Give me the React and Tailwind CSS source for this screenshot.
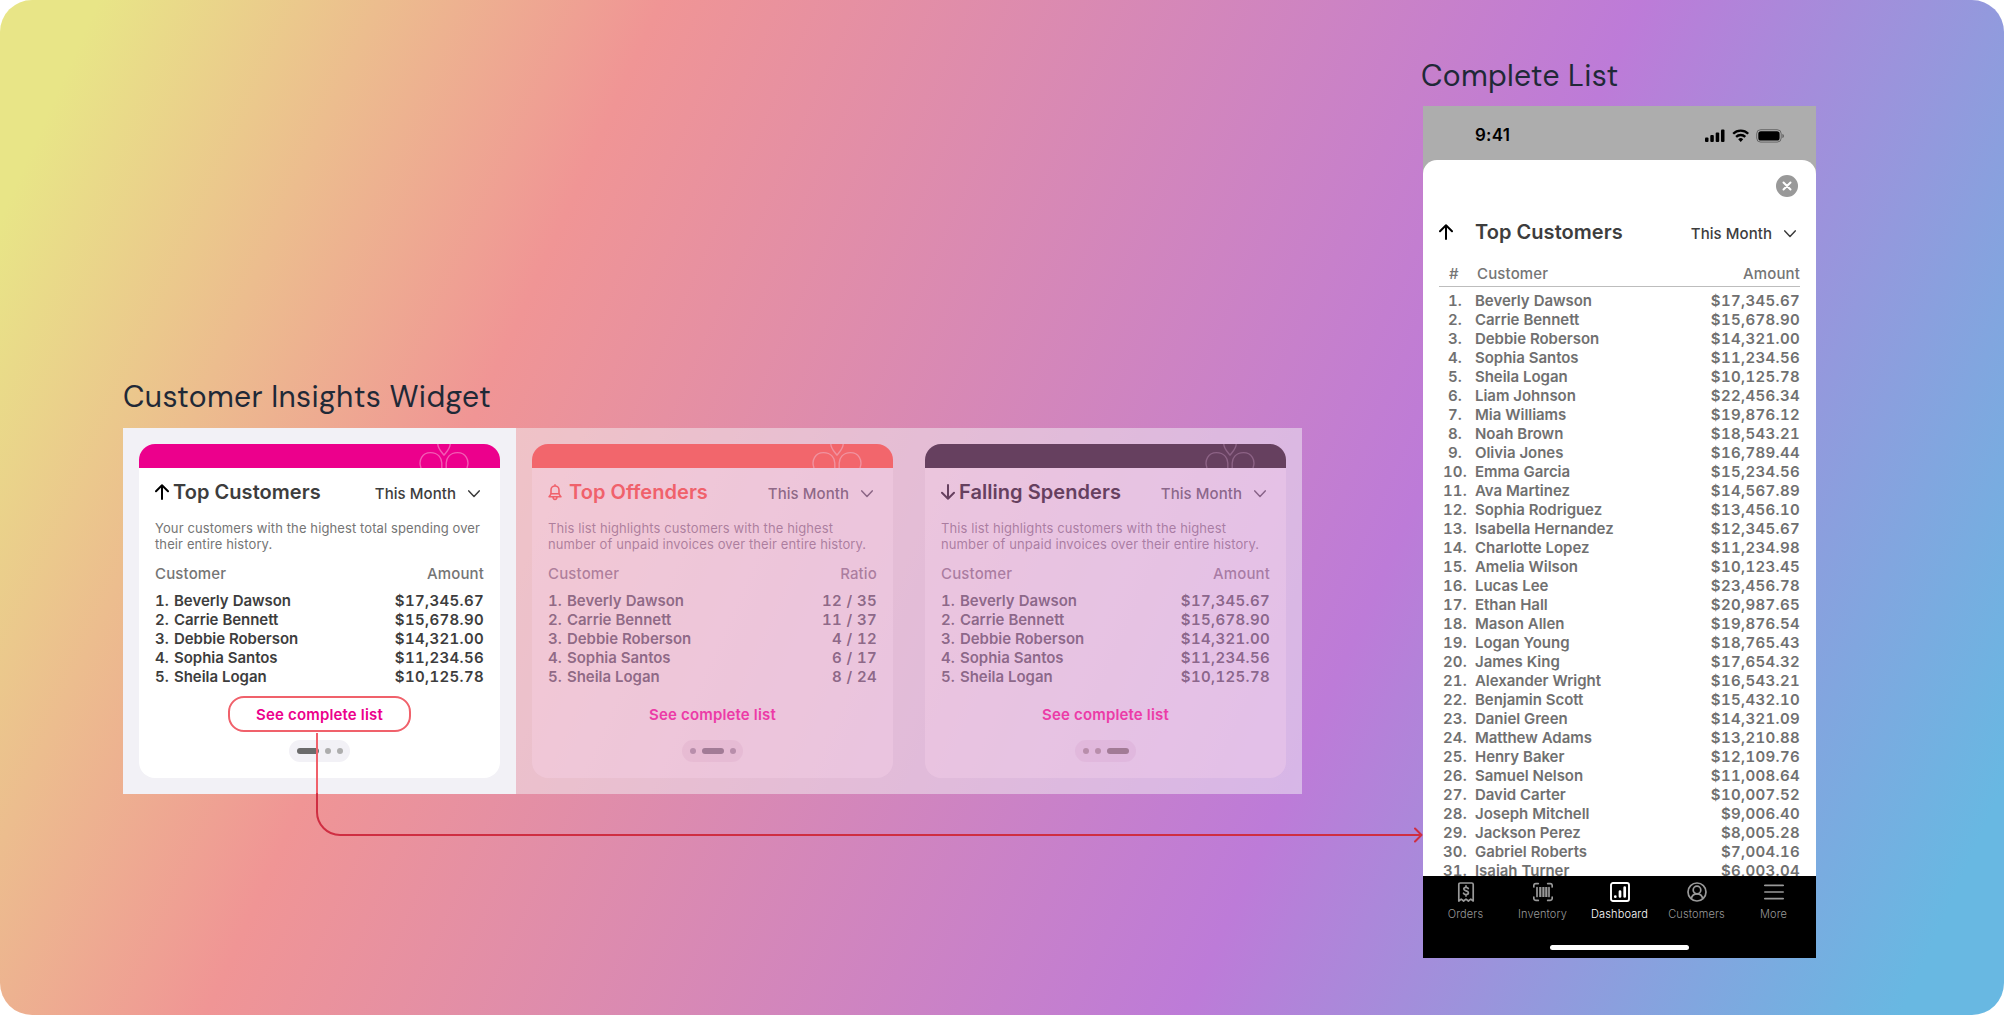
import React from 'react';

const TOP_FIVE = [
  ['Beverly Dawson', '$17,345.67', '12 / 35'],
  ['Carrie Bennett', '$15,678.90', '11 / 37'],
  ['Debbie Roberson', '$14,321.00', '4 / 12'],
  ['Sophia Santos', '$11,234.56', '6 / 17'],
  ['Sheila Logan', '$10,125.78', '8 / 24'],
];

const ALL_CUSTOMERS = [
  ['Beverly Dawson', '$17,345.67'],
  ['Carrie Bennett', '$15,678.90'],
  ['Debbie Roberson', '$14,321.00'],
  ['Sophia Santos', '$11,234.56'],
  ['Sheila Logan', '$10,125.78'],
  ['Liam Johnson', '$22,456.34'],
  ['Mia Williams', '$19,876.12'],
  ['Noah Brown', '$18,543.21'],
  ['Olivia Jones', '$16,789.44'],
  ['Emma Garcia', '$15,234.56'],
  ['Ava Martinez', '$14,567.89'],
  ['Sophia Rodriguez', '$13,456.10'],
  ['Isabella Hernandez', '$12,345.67'],
  ['Charlotte Lopez', '$11,234.98'],
  ['Amelia Wilson', '$10,123.45'],
  ['Lucas Lee', '$23,456.78'],
  ['Ethan Hall', '$20,987.65'],
  ['Mason Allen', '$19,876.54'],
  ['Logan Young', '$18,765.43'],
  ['James King', '$17,654.32'],
  ['Alexander Wright', '$16,543.21'],
  ['Benjamin Scott', '$15,432.10'],
  ['Daniel Green', '$14,321.09'],
  ['Matthew Adams', '$13,210.88'],
  ['Henry Baker', '$12,109.76'],
  ['Samuel Nelson', '$11,008.64'],
  ['David Carter', '$10,007.52'],
  ['Joseph Mitchell', '$9,006.40'],
  ['Jackson Perez', '$8,005.28'],
  ['Gabriel Roberts', '$7,004.16'],
  ['Isaiah Turner', '$6,003.04'],
];

const ArrowUp = ({ className }) => (
  <svg className={className} width="14" height="16" viewBox="0 0 14 16" fill="none" stroke="currentColor" strokeWidth="2" strokeLinecap="round" strokeLinejoin="round">
    <path d="M7 15V1.3M1 7.2L7 1.2l6 6" />
  </svg>
);

const ArrowDown = ({ className }) => (
  <svg className={className} width="14" height="16" viewBox="0 0 14 16" fill="none" stroke="currentColor" strokeWidth="2" strokeLinecap="round" strokeLinejoin="round">
    <path d="M7 1v13.7M1 8.8l6 6 6-6" />
  </svg>
);

const Bell = ({ className }) => (
  <svg className={className} width="14" height="17" viewBox="0 0 14 17" fill="none" stroke="currentColor" strokeWidth="1.6" strokeLinecap="round" strokeLinejoin="round">
    <path d="M7 .9v1M3 6a4 4 0 018 0v3.2c0 1 .4 1.600 1.900 3.600H1.100C2.600 10.800 3 10.200 3 9.200zM3.300 9.800h7.400M5 13.200c.2 1.500.9 2.300 2 2.300s1.800-.8 2-2.300" />
  </svg>
);

const Chevron = () => (
  <svg width="12" height="8" viewBox="0 0 12 8" fill="none" stroke="currentColor" strokeWidth="1.5" strokeLinecap="round" strokeLinejoin="round">
    <path d="M.8.9L6 6.400 11.200.9" />
  </svg>
);

/* Three-petal mark cropped by the colored card header */
const Petals = ({ className }) => (
  <svg className={className} width="50" height="24" viewBox="0 0 50 24" fill="none" stroke="currentColor" strokeWidth="1.4">
    <path d="M18.800 0c0 4.500 3.400 7.500 6.200 11.200C27.800 7.500 31.200 4.500 31.200 0" />
    <path d="M2 24C-1 16 3.500 8.600 11.500 8.600c8 0 11.300 6 11.300 10.400v5" />
    <path d="M48 24C51 16 46.500 8.600 38.500 8.600c-8 0-11.300 6-11.300 10.400v5" />
  </svg>
);

function Pager({ active, track, on, off }) {
  return (
    <div className={`flex h-[22px] w-[61px] items-center justify-center gap-1.5 rounded-full ${track}`}>
      {[0, 1, 2].map((i) => (
        <span key={i} className={`h-1.5 rounded-full ${i === active ? `w-[22px] ${on}` : `w-1.5 ${off}`}`} />
      ))}
    </div>
  );
}

function InsightCard({ icon, title, titleClass, header, petals, description, valueLabel, valueIndex, page, faded }) {
  const body = faded ? 'text-[#502b50]/62' : 'text-[#3d3d3d]';
  const muted = faded ? 'text-[#6b3563]/50' : 'text-[#757575]';

  return (
    <div className={`flex w-[393px] p-4 ${faded ? '' : 'bg-[#f2f1f6]'}`}>
      <div className={`flex h-[334px] w-[361px] flex-col overflow-hidden rounded-2xl ${faded ? 'bg-[#fbd8ee]/30' : 'bg-white'}`}>
        <div className={`flex h-6 shrink-0 justify-end pr-[31px] ${header}`}>
          <Petals className={petals} />
        </div>

        <div className="flex flex-1 flex-col px-4">
          <div className="mt-[11px] flex h-[26px] items-center justify-between">
            <h2 className={`flex items-center text-[20px] leading-[26px] font-semibold tracking-[0.05px] whitespace-nowrap ${titleClass}`}>
              {icon}
              {title}
            </h2>
            <div className={`mt-1 mr-[4px] flex items-center gap-3 text-[15px] font-medium tracking-[0.06px] whitespace-nowrap ${faded ? 'text-[#502b50]/62' : 'text-[#3d3d3d]'}`}>
              This Month
              <Chevron />
            </div>
          </div>

          <p className={`mt-[15px] text-[13px] leading-4 tracking-[0.11px] whitespace-pre-line ${muted}`}>{description}</p>

          <div className={`mt-3 flex h-5 items-center justify-between text-[15px] font-medium tracking-[0.15px] ${muted}`}>
            <span>Customer</span>
            <span>{valueLabel}</span>
          </div>

          <ol className={`mt-[7px] text-[15px] leading-[19px] font-semibold tabular-nums ${body}`}>
            {TOP_FIVE.map((row, i) => (
              <li key={row[0]} className="flex justify-between">
                <span className="flex">
                  <span className="w-[19px]">{i + 1}.</span>
                  <span className="tracking-[-0.04px]">{row[0]}</span>
                </span>
                <span className="tracking-[0.34px]">{row[valueIndex]}</span>
              </li>
            ))}
          </ol>

          <div className="mt-2.5 flex flex-col items-center">
            <button
              className={`h-9 w-[183px] rounded-[16px] border-2 pt-0.5 text-[15px] font-semibold tracking-[0.17px] ${
                faded ? 'border-transparent text-[#ec3ba7]' : 'border-[#f0616b] text-[#ec008c]'
              }`}
            >
              See complete list
            </button>
            <div className="mt-2">
              <Pager
                active={page}
                track={faded ? 'bg-[#a05090]/8' : 'bg-[#f2f1f6]'}
                on={faded ? 'bg-[#a27b96]' : 'bg-[#6b6b6b]'}
                off={faded ? 'bg-[#b88eab]' : 'bg-[#adadad]'}
              />
            </div>
          </div>
        </div>
      </div>
    </div>
  );
}

/* Status bar glyphs */
const StatusIcons = () => (
  <svg width="79" height="14" viewBox="0 0 79 14">
    <rect x="0" y="8.500" width="3.500" height="4.500" rx="1" />
    <rect x="5.300" y="6" width="3.500" height="7" rx="1" />
    <rect x="10.700" y="3.500" width="3.500" height="9.500" rx="1" />
    <rect x="16" y=".5" width="3.500" height="12.500" rx="1" />
    <g fill="none" stroke="#000" strokeWidth="2.300">
      <path d="M28.200 4.800a10.500 10.500 0 0115 0" />
      <path d="M31.100 7.900a6.500 6.500 0 019.200 0" />
    </g>
    <path d="M35.700 13l-2.500-2.700a3.600 3.600 0 015 0z" />
    <rect x="51.700" y=".7" width="24.500" height="12.400" rx="4" fill="none" stroke="#000" strokeOpacity=".4" />
    <rect x="53.300" y="2.200" width="21.300" height="9.400" rx="2.600" />
    <path d="M77.400 4.900v4c1-.4 1.500-1.100 1.500-2s-.5-1.600-1.500-2z" opacity=".45" />
  </svg>
);

const TABS = [
  {
    label: 'Orders',
    icon: (
      <>
        <path d="M2.800 19V2.600C2.800 1.600 3.300 1 4.300 1h11.400c1 0 1.500.6 1.500 1.600V19l-2.400-1.900L12.400 19 10 17.100 7.600 19l-2.400-1.900z" />
        <path d="M12.300 6.500c-.4-.8-1.200-1.200-2.300-1.200-1.300 0-2.200.6-2.200 1.700 0 2.500 4.600 1.200 4.600 3.800 0 1.100-1 1.800-2.400 1.800-1.200 0-2.100-.5-2.500-1.400M10 3.900v1.400M10 12.600V14" />
      </>
    ),
  },
  {
    label: 'Inventory',
    icon: (
      <>
        <path d="M.8 5V3.600c0-1.300.8-2 2-2h2.500M14.700 1.600h2.500c1.200 0 2 .7 2 2V5M.8 15v1.400c0 1.300.8 2 2 2h2.500M14.700 18.400h2.500c1.200 0 2-.7 2-2V15" />
        <path d="M4 5.600v8.800M16 5.600v8.800" />
        <path d="M7.300 5v10M10.400 5v10M13.300 5v10" strokeWidth="2.200" strokeLinecap="butt" />
      </>
    ),
  },
  {
    label: 'Dashboard',
    icon: (
      <>
        <rect x="1" y="1" width="18" height="18" rx="2" strokeWidth="1.9" />
        <path d="M5.300 14.500v.2M10 9.500v5M14.700 5.500v9" strokeWidth="2.700" />
      </>
    ),
  },
  {
    label: 'Customers',
    icon: (
      <>
        <circle cx="10" cy="10" r="9" />
        <circle cx="10" cy="8" r="3.800" />
        <path d="M4.300 16.500c.7-3 2.600-4.700 5.700-4.700s5 1.700 5.700 4.700" />
      </>
    ),
  },
  {
    label: 'More',
    icon: <path d="M.8 3.400h18.400M.8 10h18.400M.8 16.600h18.400" />,
  },
];

function CompleteList() {
  return (
    <div className="flex h-[852px] w-[393px] flex-col overflow-hidden bg-[#adadad]">
      <div className="flex h-[54px] shrink-0 items-start justify-between pt-[17px] pr-8 pl-[52px]">
        <span className="text-[17px] leading-6 font-semibold tracking-[0.2px] text-black">9:41</span>
        <div className="pt-[5.5px]">
          <StatusIcons />
        </div>
      </div>

      {/* Bottom sheet */}
      <div className="flex h-[716px] shrink-0 flex-col overflow-hidden rounded-t-[14px] bg-white px-4">
        <div className="mt-[15px] mr-[2px] flex justify-end">
          <svg width="22" height="22" viewBox="0 0 22 22">
            <circle cx="11" cy="11" r="11" fill="#999" />
            <path d="M7.500 7.500l7 7m0-7l-7 7" stroke="#fff" strokeWidth="2" strokeLinecap="round" />
          </svg>
        </div>

        <div className="mt-[22px] flex h-[26px] items-center justify-between">
          <h2 className="flex items-center text-[20px] leading-[26px] font-semibold tracking-[0.05px] text-[#3d3d3d]">
            <ArrowUp className="mr-[22px] text-black" />
            Top Customers
          </h2>
          <div className="mt-1 mr-[4px] flex items-center gap-3 text-[15px] font-medium tracking-[0.06px] text-[#3d3d3d]">
            This Month
            <Chevron />
          </div>
        </div>

        <div className="mt-[14px] flex h-[28px] shrink-0 border-b border-[#bdbdbd] pt-0.5 text-[15px] leading-[26px] font-medium tracking-[0.15px] text-[#757575]">
          <span className="w-[38px] pl-[10px]">#</span>
          <span>Customer</span>
          <span className="ml-auto">Amount</span>
        </div>

        <ol className="mt-[4px] text-[15px] leading-[19px] font-semibold text-[#707070] tabular-nums">
          {ALL_CUSTOMERS.map((row, i) => (
            <li key={i} className="flex">
              <span className="mr-[4px] w-[32px] text-center tracking-[0.2px]">{i + 1}.</span>
              <span className="tracking-[-0.04px]">{row[0]}</span>
              <span className="ml-auto tracking-[0.34px]">{row[1]}</span>
            </li>
          ))}
        </ol>
      </div>

      {/* Tab bar */}
      <nav className="flex h-[82px] shrink-0 flex-col items-center bg-black">
        <div className="flex w-[385px]">
          {TABS.map((tab) => (
            <div key={tab.label} className={`flex flex-1 flex-col items-center pt-1.5 ${tab.label === 'Dashboard' ? 'text-white' : 'text-[#999]'}`}>
              <svg width="20" height="20" viewBox="0 0 20 20" fill="none" stroke="currentColor" strokeWidth="1.7" strokeLinecap="round" strokeLinejoin="round">
                {tab.icon}
              </svg>
              <span className="mt-[5px] text-[11px] leading-[14px] font-light tracking-[0.12px]">{tab.label}</span>
            </div>
          ))}
        </div>
        <div className="mt-auto mb-2 h-[5px] w-[139px] rounded-full bg-white" />
      </nav>
    </div>
  );
}

export default function App() {
  return (
    <div className="relative flex h-[1015px] w-[2004px] items-start overflow-hidden bg-white font-['Inter',sans-serif] [font-optical-sizing:none]">
      <div className="flex h-full w-full items-start rounded-[32px] bg-[linear-gradient(114.2deg,#e8e587_4%,#f09595_26.9%,#bd7bd8_66.7%,#68b8e2_95.8%)]">
        <section className="mt-[377px] ml-[123px]">
          <h1 className="h-[51px] font-['DM_Sans','Open_Sans',sans-serif] text-[30px] leading-[40px] tracking-[0.34px] text-[#1f2937]">Customer Insights Widget</h1>
          <div className="flex h-[366px] w-[1179px]">
            <InsightCard
              icon={<ArrowUp className="mr-1 text-black" />}
              title="Top Customers"
              titleClass="text-[#3d3d3d]"
              header="bg-[#ec008c]"
              petals="text-[#f25bb4]"
              description={'Your customers with the highest total spending over\ntheir entire history.'}
              valueLabel="Amount"
              valueIndex={1}
              page={0}
            />
            <div className="flex bg-[#f2f1f6]/50">
              <InsightCard
                faded
                icon={<Bell className="mr-[7px]" />}
                title="Top Offenders"
                titleClass="text-[#f0616b]"
                header="bg-[#f2666c]"
                petals="text-[#f0929f]"
                description={'This list highlights customers with the highest\nnumber of unpaid invoices over their entire history.'}
                valueLabel="Ratio"
                valueIndex={2}
                page={1}
              />
              <InsightCard
                faded
                icon={<ArrowDown className="mr-1" />}
                title="Falling Spenders"
                titleClass="text-[#66405f]"
                header="bg-[#66405f]"
                petals="text-[#8c6285]"
                description={'This list highlights customers with the highest\nnumber of unpaid invoices over their entire history.'}
                valueLabel="Amount"
                valueIndex={1}
                page={2}
              />
            </div>
          </div>
        </section>

        <section className="mt-[56px] ml-[121px]">
          <h1 className="-ml-0.5 h-[50px] font-['DM_Sans','Open_Sans',sans-serif] text-[30px] leading-[40px] tracking-[0.3px] text-[#1f2937]">Complete List</h1>
          <CompleteList />
        </section>
      </div>

      {/* Connector from the button to the phone */}
      <svg className="pointer-events-none absolute top-[732px] left-[310px]" width="1114" height="112" viewBox="0 0 1114 112" fill="none" strokeWidth="2">
        <path d="M7 1v61" stroke="#f0616b" />
        <path d="M7 62v18a23 23 0 0023 23h1080M1105 96.500l6.500 6.500-6.500 6.500" stroke="#cf2e42" strokeLinecap="round" strokeLinejoin="round" />
      </svg>
    </div>
  );
}
